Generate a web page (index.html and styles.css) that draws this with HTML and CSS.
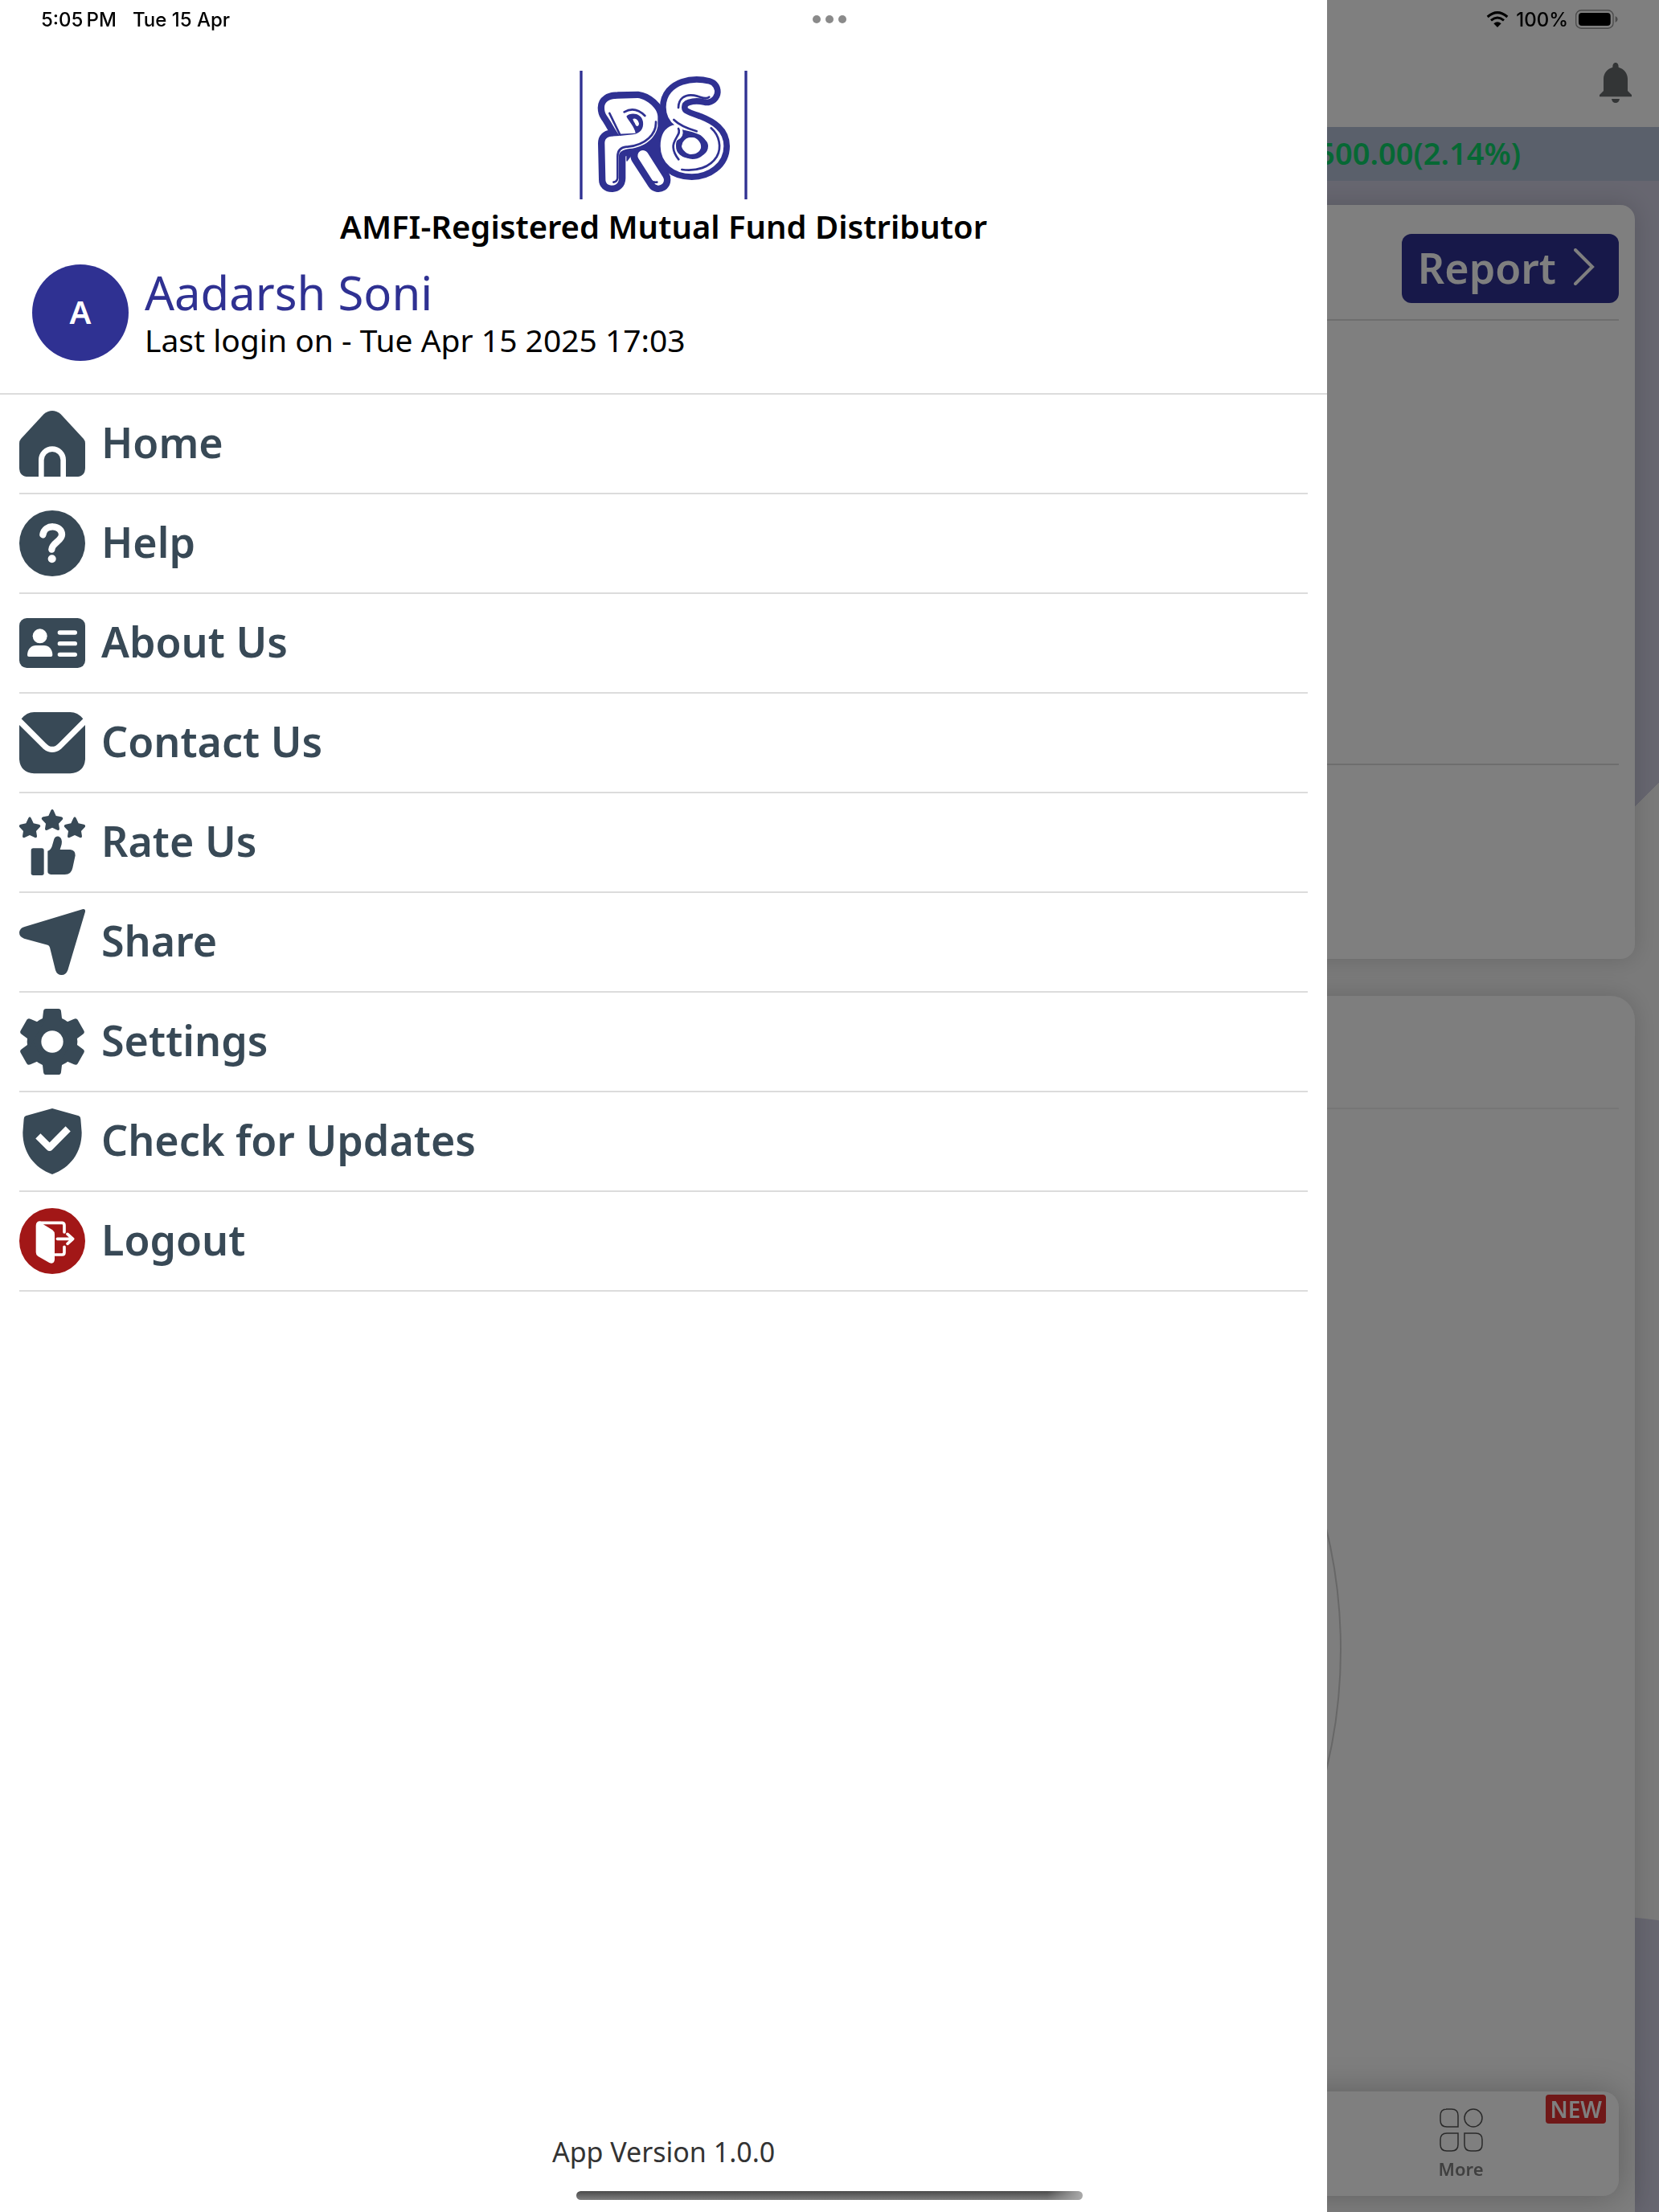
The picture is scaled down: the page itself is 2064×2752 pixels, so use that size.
FILE: index.html
```html
<!DOCTYPE html>
<html lang="en">
<head>
    <meta charset="UTF-8">
    <meta name="viewport" content="width=device-width, initial-scale=1.0">
    <title>Menu</title>
    <link rel="stylesheet" href="styles.css">
</head>
<body>
    <!-- Dashboard behind the drawer -->
    <main class="dashboard">
        <header class="topbar">
            <button class="bell" aria-label="Notifications">
                <svg viewBox="0 0 120 150"><path d="M60 0c8 0 11 7 11 17 20 6 34 22 34 43v45l15 15v7H0v-7l15-15V60c0-21 14-37 34-43C49 7 52 0 60 0zM45 135h30c-1 9-7 15-15 15s-14-6-15-15z"/></svg>
            </button>
        </header>
        <div class="ticker">500.00(2.14%)</div>

        <section class="card summary">
            <div class="card-head">
                <button class="report">
                    Report
                    <svg viewBox="0 0 26 46"><path d="M2 2l21 21L2 44"/></svg>
                </button>
            </div>
            <div class="summary-body"></div>
            <div class="summary-foot"></div>
        </section>

        <section class="card chart-card">
            <div class="chart-head"></div>
            <div class="chart-body">
                <div class="chart-ring"></div>
            </div>
        </section>
    </main>

    <nav class="tabbar">
        <a href="#" class="tab">
            <svg viewBox="0 0 54 54">
                <path d="M8 1h7q8 0 8 8v14H9q-8 0-8-8V9q0-8 8-8zM9 31h14v14q0 8-8 8H9q-8 0-8-8v-6q0-8 8-8zM31 31h14q8 0 8 8v6q0 8-8 8h-6q-8 0-8-8z"/>
                <circle cx="42" cy="12" r="11"/>
            </svg>
            <span>More</span>
        </a>
        <span class="badge">NEW</span>
    </nav>

    <div class="overlay"></div>

    <aside class="drawer">
        <div class="drawer-head">
            <svg class="logo" viewBox="93 54 627 480" role="img" aria-label="RS">
                <path class="bar" d="M99 54v480M714 54v480"/>
                <g class="outer">
                    <path d="M186 192C186 170 205 158 235 158L310 156C345 160 385 195 385 225V262C378 300 345 335 290 344 262 346 240 352 240 372V455C240 472 228 482 214 482 198 482 190 474 190 460L187 325C187 308 196 301 212 299L243 297C225 275 212 245 195 222 188 212 186 202 186 192Z"/>
                    <path class="leg" d="M328 370l60 92"/>
                    <path class="curl" d="M568 132C520 120 445 130 445 190 445 235 480 245 530 262 575 280 602 300 602 335 602 380 560 410 512 410 460 410 424 380 424 335 424 305 435 290 450 285"/>
                    <path class="web" d="M385 175L445 240 410 400 430 450 400 420 300 350 270 390V350L340 330Z"/>
                </g>
                <g class="inner">
                    <path d="M186 192C186 170 205 158 235 158L310 156C345 160 385 195 385 225V262C378 300 345 335 290 344 262 346 240 352 240 372V455C240 472 228 482 214 482 198 482 190 474 190 460L187 325C187 308 196 301 212 299L243 297C225 275 212 245 195 222 188 212 186 202 186 192Z"/>
                    <path class="leg" d="M330 371l58 91"/>
                    <path class="curl" d="M568 132C520 120 445 130 445 190 445 235 480 245 530 262 575 280 602 300 602 335 602 380 560 410 512 410 460 410 424 380 424 335 424 305 435 290 450 285"/>
                </g>
                <path class="hole" d="M268 224C282 208 325 210 330 245 333 270 320 288 292 292L243 297 238 290 302 287C300 265 275 240 268 224ZM480 276C500 278 530 286 545 295 568 312 571 330 566 345 556 372 540 384 515 384 485 382 464 360 464 335 466 312 482 300 480 276Z"/>
                <path class="pearl" d="M292 234C302 228 314 240 315 252 314 262 306 264 302 256 300 248 294 244 292 234ZM478 322C490 302 504 301 522 304 538 312 549 326 546 343 540 360 525 367 505 366 488 362 476 347 474 336Z"/>
                <g class="shine">
                    <path d="M205 213l38 78M260 208Q300 185 337 222M378 245C380 290 340 332 272 338M268 338C245 340 235 352 235 375V455Q233 468 220 470M307 383l48 77Q365 472 382 470"/>
                    <path d="M462 192C462 160 485 140 520 146 545 150 565 165 577 152M445 237Q470 262 530 280M584 268C615 295 625 340 605 375 580 415 530 430 475 423M462 270C475 290 440 310 443 340 444 360 455 375 463 385"/>
                </g>
            </svg>
            <p class="tagline">AMFI-Registered Mutual Fund Distributor</p>
            <div class="profile">
                <div class="avatar">A</div>
                <div>
                    <h1 class="name">Aadarsh Soni</h1>
                    <p class="last-login">Last login on - Tue Apr 15 2025 17:03</p>
                </div>
            </div>
        </div>

        <ul class="menu">
            <li><a href="#">
                <svg viewBox="0 0 246 246"><path d="M92 12Q123-12 154 12L240 105Q246 112 246 122V212Q246 246 212 246H34Q0 246 0 212V122Q0 112 6 105Z"/><path class="line" stroke-width="20" d="M82 246V184a41 41 0 0 1 82 0V246"/></svg>
                Home
            </a></li>
            <li><a href="#">
                <svg viewBox="0 0 246 246"><circle cx="123" cy="123" r="123"/><path class="line round" stroke-width="25" d="M88 91C94 48 159 54 159 90 159 115 122 120 121 146"/><circle class="cut" cx="122" cy="181" r="15"/></svg>
                Help
            </a></li>
            <li><a href="#">
                <svg viewBox="0 0 246 246"><rect y="30" width="246" height="186" rx="28"/><circle class="cut" cx="77" cy="97" r="27"/><path class="cut" d="M30 168C30 146 45 132 62 132H92C110 132 124 146 124 168Q124 174 118 174H36Q30 174 30 168Z"/><path class="line round" stroke-width="16" d="M151 84h57M151 125h57M151 166h57"/></svg>
                About Us
            </a></li>
            <li><a href="#">
                <svg viewBox="0 0 246 246"><path d="M8 34Q28 9 55 9H190Q218 9 238 34L147 125Q123 150 99 125ZM0 57L90 146Q123 172 156 146L246 57V185Q242 234 190 238H55Q4 234 0 185Z"/></svg>
                Contact Us
            </a></li>
            <li><a href="#">
                <svg viewBox="0 0 246 246">
                    <path id="star" d="M118 4q5-9 10 0l9 20 20 4q9 3 4 10l-14 15 3 19q0 8-8 5l-19-9-19 9q-8 3-8-5l3-19-14-15q-5-7 4-10l20-4z"/>
                    <use href="#star" x="-84" y="28"/>
                    <use href="#star" x="84" y="28"/>
                    <rect x="44" y="145" width="48" height="101" rx="8"/>
                    <path d="M106 155Q117 152 122 138L130 110Q136 98 148 101 162 108 158 130L152 150H190Q210 152 209 172L199 218Q194 243 170 243H118Q106 242 106 232Z"/>
                </svg>
                Rate Us
            </a></li>
            <li><a href="#">
                <svg viewBox="0 0 246 246"><path d="M238 0Q248 0 246 10L181 228Q174 246 158 246 141 246 135 228L114 143Q112 136 106 134L18 110Q0 104 0 88 2 70 20 66Z"/></svg>
                Share
            </a></li>
            <li><a href="#">
                <svg viewBox="0 0 246 246">
                    <circle cx="123" cy="123" r="94"/>
                    <path id="tooth" d="M90 10Q91 0 100 0H146Q155 0 156 10L160 44 180 60H66L86 44Z"/>
                    <use href="#tooth" transform="rotate(60 123 123)"/>
                    <use href="#tooth" transform="rotate(120 123 123)"/>
                    <use href="#tooth" transform="rotate(180 123 123)"/>
                    <use href="#tooth" transform="rotate(240 123 123)"/>
                    <use href="#tooth" transform="rotate(300 123 123)"/>
                    <circle class="cut" cx="123" cy="123" r="41"/>
                </svg>
                Settings
            </a></li>
            <li><a href="#">
                <svg viewBox="0 0 246 246"><path d="M123 0L222 28Q229 31 229 40L233 90C233 165 190 222 123 246 56 222 13 165 13 90L17 40Q17 31 24 28Z"/><path class="line" stroke-width="26" stroke-linejoin="round" d="M70 103L113 146 182 76"/></svg>
                Check for Updates
            </a></li>
            <li><a href="#">
                <svg viewBox="0 0 246 246"><circle class="red" cx="123" cy="123" r="123"/><path class="cut" d="M62 66Q62 49 78 49L92 62 124 82Q132 88 132 98V192Q130 211 112 204L70 180Q62 175 62 165Z"/><path class="line round" stroke-width="11" d="M78 55H160Q168 56 168 64V90M134 174H160Q168 174 168 166V145M142 115H200M180 97L200 115 180 133"/></svg>
                Logout
            </a></li>
        </ul>

        <p class="version">App Version 1.0.0</p>
    </aside>

    <!-- System chrome -->
    <div class="statusbar">
        <div class="clock"><span>5:05&#8201;PM</span><span>Tue 15 Apr</span></div>
        <div class="dots"><i></i><i></i><i></i></div>
        <div class="battery">
            <svg class="wifi" viewBox="0 0 84 60"><path d="M5 21Q42-11 79 21M18 34Q42 14 66 34"/><path class="tip" d="M28 46Q42 34 56 46L42 60z"/></svg>
            <span>100%</span>
            <svg class="cell" viewBox="0 0 160 72"><rect class="shell" x="2" y="2" width="140" height="68" rx="20"/><rect x="12" y="12" width="120" height="48" rx="12"/><path class="nub" d="M150 24q9 4 9 12t-9 12z"/></svg>
        </div>
    </div>
    <div class="home-indicator"></div>
</body>
</html>
```
FILE: styles.css
```css
* {
    box-sizing: border-box;
}
body {
    margin: 0;
    font-family: "Noto Sans", "Open Sans", sans-serif;
    color: #000;
}
p, h1, ul {
    margin: 0;
    padding: 0;
}
button {
    border: none;
    cursor: pointer;
    font-family: inherit;
}
a {
    text-decoration: none;
}
svg {
    display: block;
    flex: none;
}

/* dashboard */
.dashboard {
    min-height: 100vh;
    display: flex;
    flex-direction: column;
    background:
        radial-gradient(circle at 96% 2984px, #cecde0 600px, transparent 601px),
        linear-gradient(135deg, #cecde0 96%, #f5f5f5 96%) top / 100% 1100px no-repeat,
        #f5f5f5;
}
.topbar {
    height: 158px;
    padding: 78px 34px 0;
    background: #fff;
    display: flex;
    justify-content: flex-end;
    align-items: flex-start;
}
.bell {
    padding: 0;
    background: none;
}
.bell svg {
    width: 40px;
    height: 50px;
    fill: #666a6c;
}
.ticker {
    padding: 0 172px 3px 0;
    background: #b4c0d6;
    color: #0cd068;
    font-size: 38px;
    font-weight: 600;
    line-height: 64px;
    text-align: right;
}
.card {
    margin: 30px 30px 0;
    padding: 0 20px;
    background: #fff;
    border-radius: 18px;
    box-shadow: 0 0 30px rgba(0, 0, 0, 0.16);
}
.card-head {
    display: flex;
    justify-content: flex-end;
    padding: 36px 0 20px;
    border-bottom: 2px solid #dcdcdc;
}
.report {
    display: flex;
    align-items: center;
    gap: 22px;
    height: 86px;
    padding: 0 30px 4px 20px;
    border-radius: 12px;
    background: #2f3192;
    color: #fff;
    font-size: 52px;
    font-weight: 600;
}
.report svg {
    width: 26px;
    height: 46px;
    fill: none;
    stroke: #fff;
    stroke-width: 4;
    stroke-linecap: round;
}
.summary-body {
    min-height: 553px;
    border-bottom: 2px solid #dcdcdc;
}
.summary-foot {
    min-height: 241px;
}
.chart-card {
    flex: 1;
    margin-top: 46px;
    border-radius: 30px 30px 0 0;
    background: #fcfcfc;
}
.chart-head {
    min-height: 141px;
    border-bottom: 2px solid #ececec;
}
.chart-body {
    display: flex;
    justify-content: center;
    padding-top: 35px;
}
.chart-ring {
    width: 1274px;
    height: 1274px;
    border: 2px solid #cfcfcf;
    border-radius: 50%;
}

/* bottom tabs */
.tabbar {
    position: fixed;
    left: 50px;
    right: 50px;
    bottom: 20px;
    height: 130px;
    display: grid;
    grid-template-columns: repeat(5, 1fr);
    background: #fff;
    border-radius: 20px;
    box-shadow: 0 0 40px rgba(0, 0, 0, 0.25);
}
.tab {
    grid-column: 5;
    display: flex;
    flex-direction: column;
    align-items: center;
    padding-top: 21px;
    color: #808080;
    font-size: 22px;
    font-weight: 600;
    line-height: 42px;
}
.tab svg {
    width: 54px;
    height: 54px;
    fill: none;
    stroke: #555;
    stroke-width: 1.5;
}
.badge {
    position: absolute;
    top: 4px;
    right: 16px;
    padding: 0 5px;
    border-radius: 4px;
    background: #e03030;
    color: #fff;
    font-size: 28px;
    font-weight: 600;
    line-height: 36px;
}

.overlay {
    position: fixed;
    inset: 0;
    background: rgba(0, 0, 0, 0.5);
}

/* drawer */
.drawer {
    position: fixed;
    top: 0;
    bottom: 0;
    left: 0;
    width: 80%;
    display: flex;
    flex-direction: column;
    background: #fff;
}
.drawer-head {
    padding: 88px 40px 40px;
    border-bottom: 2px solid #dcdcdc;
}
.logo {
    width: 209px;
    height: 160px;
    margin: 0 auto;
    fill: none;
    stroke-linecap: round;
    stroke-linejoin: round;
}
.logo .bar {
    stroke: #2f3192;
    stroke-width: 10;
    stroke-linecap: butt;
}
.logo .outer {
    fill: #2f3192;
    stroke: #2f3192;
    stroke-width: 50;
}
.logo .outer .leg {
    stroke-width: 90;
}
.logo .outer .curl {
    fill: none;
    stroke-width: 104;
}
.logo .outer .web {
    stroke-width: 4;
}
.logo .inner {
    fill: #fff;
}
.logo .inner .leg {
    stroke: #fff;
    stroke-width: 40;
}
.logo .inner .curl {
    fill: none;
    stroke: #fff;
    stroke-width: 58;
}
.logo .hole {
    fill: #2f3192;
}
.logo .pearl {
    fill: #fff;
}
.logo .shine {
    stroke: #2f3192;
    stroke-width: 8;
}
.tagline {
    font-size: 40px;
    font-weight: 600;
    line-height: 68px;
    text-align: center;
}
.profile {
    display: flex;
    align-items: center;
    gap: 20px;
    margin-top: 13px;
}
.avatar {
    flex: none;
    width: 120px;
    height: 120px;
    border-radius: 50%;
    background: #2f3192;
    color: #fff;
    font-size: 40px;
    font-weight: 600;
    line-height: 118px;
    text-align: center;
}
.name {
    color: #2f3192;
    font-size: 58px;
    font-weight: 400;
    line-height: 68px;
}
.last-login {
    font-size: 39px;
    line-height: 50px;
}
.menu {
    flex: 1;
    padding: 0 24px;
    list-style: none;
}
.menu a {
    display: flex;
    align-items: flex-start;
    gap: 20px;
    padding: 20px 0;
    border-bottom: 2px solid #dcdcdc;
    color: #384956;
    font-size: 52px;
    font-weight: 600;
    line-height: 78px;
}
.menu svg {
    width: 82px;
    height: 82px;
    fill: #384956;
}
.menu .cut {
    fill: #fff;
}
.menu .line {
    fill: none;
    stroke: #fff;
}
.menu .round {
    stroke-linecap: round;
    stroke-linejoin: round;
}
.menu .red {
    fill: #a21717;
}
.version {
    padding-bottom: 50px;
    color: #333;
    font-size: 34px;
    line-height: 50px;
    text-align: center;
}

/* system chrome */
.statusbar {
    position: fixed;
    top: 0;
    left: 0;
    right: 0;
    height: 48px;
    padding: 0 51px;
    display: grid;
    grid-template-columns: 1fr auto 1fr;
    align-items: center;
    font-family: Inter, sans-serif;
    font-size: 24px;
    font-weight: 500;
}
.clock {
    display: flex;
    gap: 20px;
}
.dots {
    display: flex;
    gap: 6px;
}
.dots i {
    width: 10px;
    height: 10px;
    border-radius: 50%;
    background: #8a8a8a;
}
.battery {
    display: flex;
    justify-content: flex-end;
    align-items: center;
    gap: 9px;
}
.wifi {
    width: 28px;
    height: 20px;
    fill: none;
    stroke: #000;
    stroke-width: 9;
}
.wifi .tip {
    fill: #000;
    stroke: none;
}
.cell {
    width: 53px;
    height: 24px;
}
.cell .shell {
    fill: none;
    stroke: #4a4a4a;
    stroke-width: 4;
}
.cell .nub {
    fill: #4a4a4a;
}
.home-indicator {
    position: fixed;
    left: 50%;
    bottom: 15px;
    width: 630px;
    height: 11px;
    margin-left: -315px;
    border-radius: 6px;
    background:
        linear-gradient(90deg, transparent 93%, #aaa),
        linear-gradient(#4a4a4a, #808080);
}
```
